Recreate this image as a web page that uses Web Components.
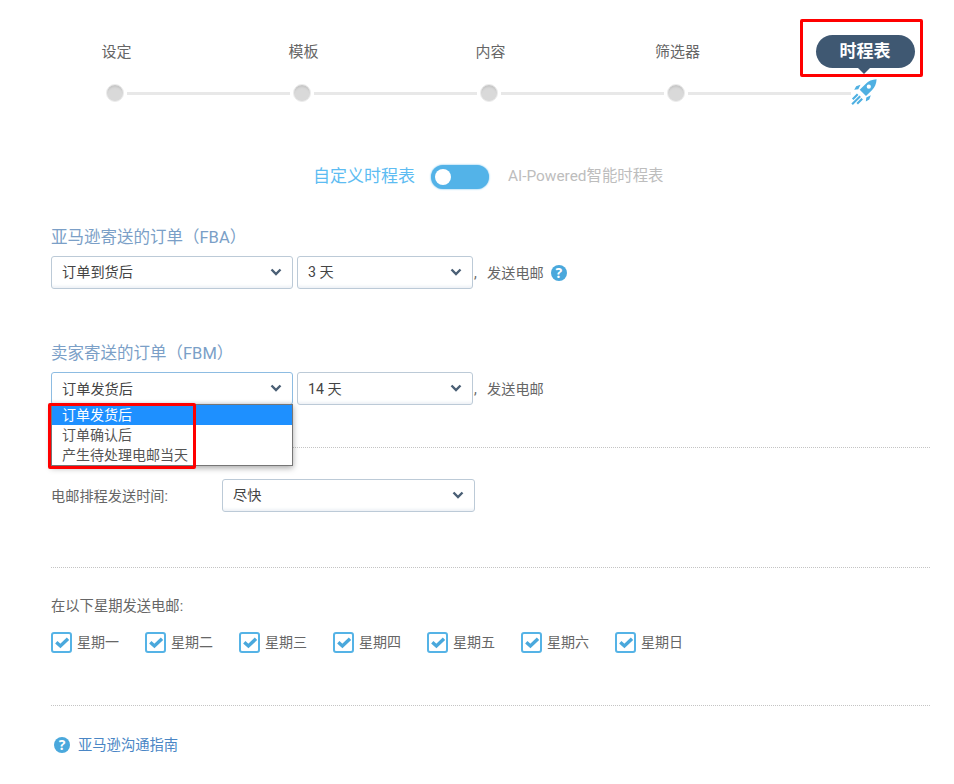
<!DOCTYPE html>
<html lang="zh-CN">
<head>
<meta charset="utf-8">
<title>时程表</title>
<style>
  html, body { margin: 0; padding: 0; background: #fff; }
  body { font: 14px/20px Roboto, "Noto Sans CJK SC", sans-serif; color: #666; }
</style>
</head>
<body>
<x-app>
  <x-stepper slot="stepper">
    <x-step>设定</x-step>
    <x-step>模板</x-step>
    <x-step>内容</x-step>
    <x-step>筛选器</x-step>
    <x-step active highlighted>时程表</x-step>
  </x-stepper>

  <x-toggle slot="toggle" on="自定义时程表" off="AI-Powered智能时程表"></x-toggle>

  <x-section>亚马逊寄送的订单（FBA）</x-section>
  <x-row>
    <x-select w="242">订单到货后</x-select>
    <x-select w="176">3 天</x-select>
    <x-note help>发送电邮</x-note>
  </x-row>

  <x-section gap="51">卖家寄送的订单（FBM）</x-section>
  <x-row>
    <x-select w="242" focused low>订单发货后
      <x-option slot="menu" selected>订单发货后</x-option>
      <x-option slot="menu">订单确认后</x-option>
      <x-option slot="menu">产生待处理电邮当天</x-option>
    </x-select>
    <x-select w="176" low>14 天</x-select>
    <x-note>发送电邮</x-note>
  </x-row>

  <x-divider gap="42"></x-divider>

  <x-field label="电邮排程发送时间:"><x-select w="253">尽快</x-select></x-field>

  <x-divider gap="55"></x-divider>

  <x-days label="在以下星期发送电邮:">
    <x-check>星期一</x-check>
    <x-check>星期二</x-check>
    <x-check>星期三</x-check>
    <x-check>星期四</x-check>
    <x-check>星期五</x-check>
    <x-check>星期六</x-check>
    <x-check>星期日</x-check>
  </x-days>

  <x-divider gap="52"></x-divider>

  <x-guide>亚马逊沟通指南</x-guide>
</x-app>

<script>
function comp(name, html) {
  customElements.define(name, class extends HTMLElement {
    constructor() {
      super();
      this.attachShadow({ mode: 'open' });
    }
    connectedCallback() {
      this.shadowRoot.innerHTML = typeof html === 'function' ? html(this) : html;
    }
  });
}

const HELP = `<span class="help">?</span>`;
const HELP_CSS = `.help{display:inline-block;width:16px;height:16px;border-radius:50%;background:#4aa8dc;color:#fff;
  font:700 14px/16px "Open Sans",sans-serif;text-align:center;flex:none}`;

comp('x-app', `<style>
  :host{display:block;width:954px;height:784px;overflow:hidden;box-sizing:border-box;padding-top:35px}
  .form{margin:0 24px 0 51px}
</style>
<slot name="stepper"></slot><slot name="toggle"></slot><div class="form"><slot></slot></div>`);

comp('x-stepper', el => {
  let track = '';
  [...el.children].forEach(s => {
    if (s.hasAttribute('active')) {
      track += `<svg class="rocket" width="28" height="28" viewBox="0 0 28 28" aria-hidden="true">
        <path d="M26.600 1.200c-4.600.2-8.200 1.900-11 4.700L9.700 11.800l6.300 6.300 5.900-5.900c2.800-2.800 4.500-6.400 4.700-11z" fill="#4fb0e2"/>
        <circle cx="18.800" cy="8.700" r="2.100" fill="#fff"/>
        <path d="M10.500 6.800 6.200 8.300 4.200 11.800l4.100-.5zM20.800 17.200l-1.500 4.300-3.500 2 .5-4.100z" fill="#4fb0e2"/>
        <path d="M7.700 16.200 2.700 21.200M10.200 18.200 2.100 26.300M12.200 20.700l-5 5" stroke="#4fb0e2" stroke-width="2.100" fill="none"/>
      </svg>`;
    } else {
      track += `<i class="dot"></i><i class="line"></i>`;
    }
  });
  return `<style>
    :host{display:block}
    .labels{display:grid;grid-template-columns:repeat(5,187px);padding-left:23px;height:33px;align-items:center;justify-items:center}
    .track{display:flex;align-items:center;height:18px;margin-top:16px;padding-left:106px;position:relative}
    .dot{display:block;flex:none;width:18px;height:18px;border-radius:50%;box-sizing:border-box;
      background:#d9d9d9;border:1px solid #ececec;box-shadow:inset 0 3px 2px -1px #c6c6c6}
    .line{display:block;flex:none;width:163px;height:3px;margin:0 3px;background:#e8e8e8}
    .rocket{flex:none;margin:-2px 0 0 -4px}
  </style><div class="labels"><slot></slot></div><div class="track">${track}</div>`;
});

comp('x-step', `<style>
  :host{display:block;font-size:15px;line-height:20px;color:#666;position:relative}
  :host([active]){color:#fff;font-weight:700;font-size:17px;line-height:33px;width:99px;height:33px;background:#3f5872;
    border-radius:17px;text-align:center;left:.5px}
  :host([active])::after{content:"";position:absolute;left:50%;margin-left:-7px;top:33px;border:6px solid transparent;
    border-bottom:0;border-top-color:#3f5872}
  :host([highlighted])::before{content:"";position:absolute;left:-16px;right:-8px;top:-16px;bottom:-9px;
    border:3.500px solid #f00;border-radius:2px;box-sizing:border-box}
</style><slot></slot>`);

comp('x-toggle', el => `<style>
  :host{display:flex;align-items:center;margin:63px 0 0 313px;height:24px}
  .on{font-size:17px;line-height:22px;color:#5dbcf2;width:118px;white-space:nowrap;margin-top:-3px}
  .sw{width:58px;height:24px;border-radius:12px;background:#53b3e8;position:relative;flex:none;box-shadow:0 0 2px #53b3e8}
  .knob{position:absolute;left:4px;top:4px;width:16px;height:16px;border-radius:50%;background:#fff}
  .off{font-size:15.400px;line-height:22px;color:#bdbdbd;margin:-3px 0 0 19px;white-space:nowrap}
</style><span class="on">${el.getAttribute('on')}</span><span class="sw"><span class="knob"></span></span><span class="off">${el.getAttribute('off')}</span>`);

comp('x-section', el => `<style>
  :host{display:block;font-size:16.500px;line-height:24px;color:#7b9fc7;margin:${el.getAttribute('gap') || 35}px 0 8px;white-space:nowrap}
  span{display:block;padding-top:2px;height:22px}
</style><span><slot></slot></span>`);

comp('x-row', `<style>:host{display:flex;align-items:center;gap:4px;height:33px}</style><slot></slot>`);

comp('x-select', el => `<style>
  :host{display:block;position:relative;flex:none;width:${el.getAttribute('w')}px;height:33px;box-sizing:border-box;
    border:1px solid ${el.hasAttribute('focused') ? '#8dbce2' : '#bccad7'};border-radius:3px;background:#fff;
    box-shadow:inset 0 -4px 3px -2px #eef2f6;font-size:14.200px;line-height:${el.hasAttribute('low') ? 33 : 31}px;color:#444;padding-left:10px;white-space:nowrap}
  svg{position:absolute;right:10px;top:11px}
  .menu{position:absolute;left:-1px;top:31px;width:242px;box-sizing:border-box;border:1px solid #767676;
    background:#fff;box-shadow:0 2px 6px rgba(0,0,0,.35);z-index:2;line-height:20px;display:none}
  .menu.has{display:block}
  .hl{position:absolute;left:-4.500px;top:-2px;width:148px;height:66px;box-sizing:border-box;border:3.500px solid #f00;border-radius:2px;pointer-events:none}
</style><slot></slot><svg width="12" height="8" viewBox="0 0 12 8" aria-hidden="true"><path d="M1.500 1.500 6 6l4.500-4.500" fill="none" stroke="#4a5f75" stroke-width="2.400"/></svg><div class="menu ${el.querySelector('[slot=menu]') ? 'has' : ''}"><slot name="menu"></slot><div class="hl"></div></div>`);

comp('x-option', `<style>
  :host{display:block;height:20px;line-height:21px;padding-left:11px;color:#555;font-size:14px;margin-left:-1px;padding-right:1px}
  :host([selected]){background:#1e90ff;color:#fff;margin-left:0;padding-left:10px}
</style><slot></slot>`);

comp('x-note', el => `<style>
  :host{display:flex;align-items:center;color:#666;font-size:14.200px;margin-left:-3px;white-space:nowrap}
  .c{width:13px}
  ${HELP_CSS}
  .help{margin-left:7px}
</style><span class="c">,</span><slot></slot>${el.hasAttribute('help') ? HELP : ''}`);

comp('x-divider', el => `<style>
  :host{display:block;height:0;border-top:1px dotted #c4c4c4;margin-top:${el.getAttribute('gap')}px}
</style>`);

comp('x-field', el => `<style>
  :host{display:flex;align-items:center;margin-top:31px;height:33px}
  .l{width:171px;color:#666;font-size:14.200px;white-space:nowrap}
</style><span class="l">${el.getAttribute('label')}</span><slot></slot>`);

comp('x-days', el => `<style>
  :host{display:block;margin-top:28px}
  .l{display:block;line-height:20px;color:#666;font-size:14.300px}
  .g{display:flex;margin-top:16px}
</style><span class="l">${el.getAttribute('label')}</span><div class="g"><slot></slot></div>`);

comp('x-check', `<style>
  :host{display:flex;align-items:center;width:94px;height:21px;color:#666;font-size:14px;white-space:nowrap}
  .b{width:21px;height:21px;box-sizing:border-box;border:2px solid #55b3e6;border-radius:3px;margin-right:5px;flex:none}
  .t{margin:-2px 0 0 0}
  svg{display:block}
</style><span class="b"><svg width="17" height="17" viewBox="0 0 17 17" aria-hidden="true"><path d="M3.300 8.300 7.400 12 15 4.800" fill="none" stroke="#4aa8dc" stroke-width="3.400"/></svg></span><span class="t"><slot></slot></span>`);

comp('x-guide', `<style>
  :host{display:flex;align-items:center;margin:29px 0 0 3px;height:20px;color:#4a86c5;font-size:14.300px;white-space:nowrap}
  ${HELP_CSS}
  .help{margin-right:8px}
</style>${HELP}<slot></slot>`);
</script>
</body>
</html>
